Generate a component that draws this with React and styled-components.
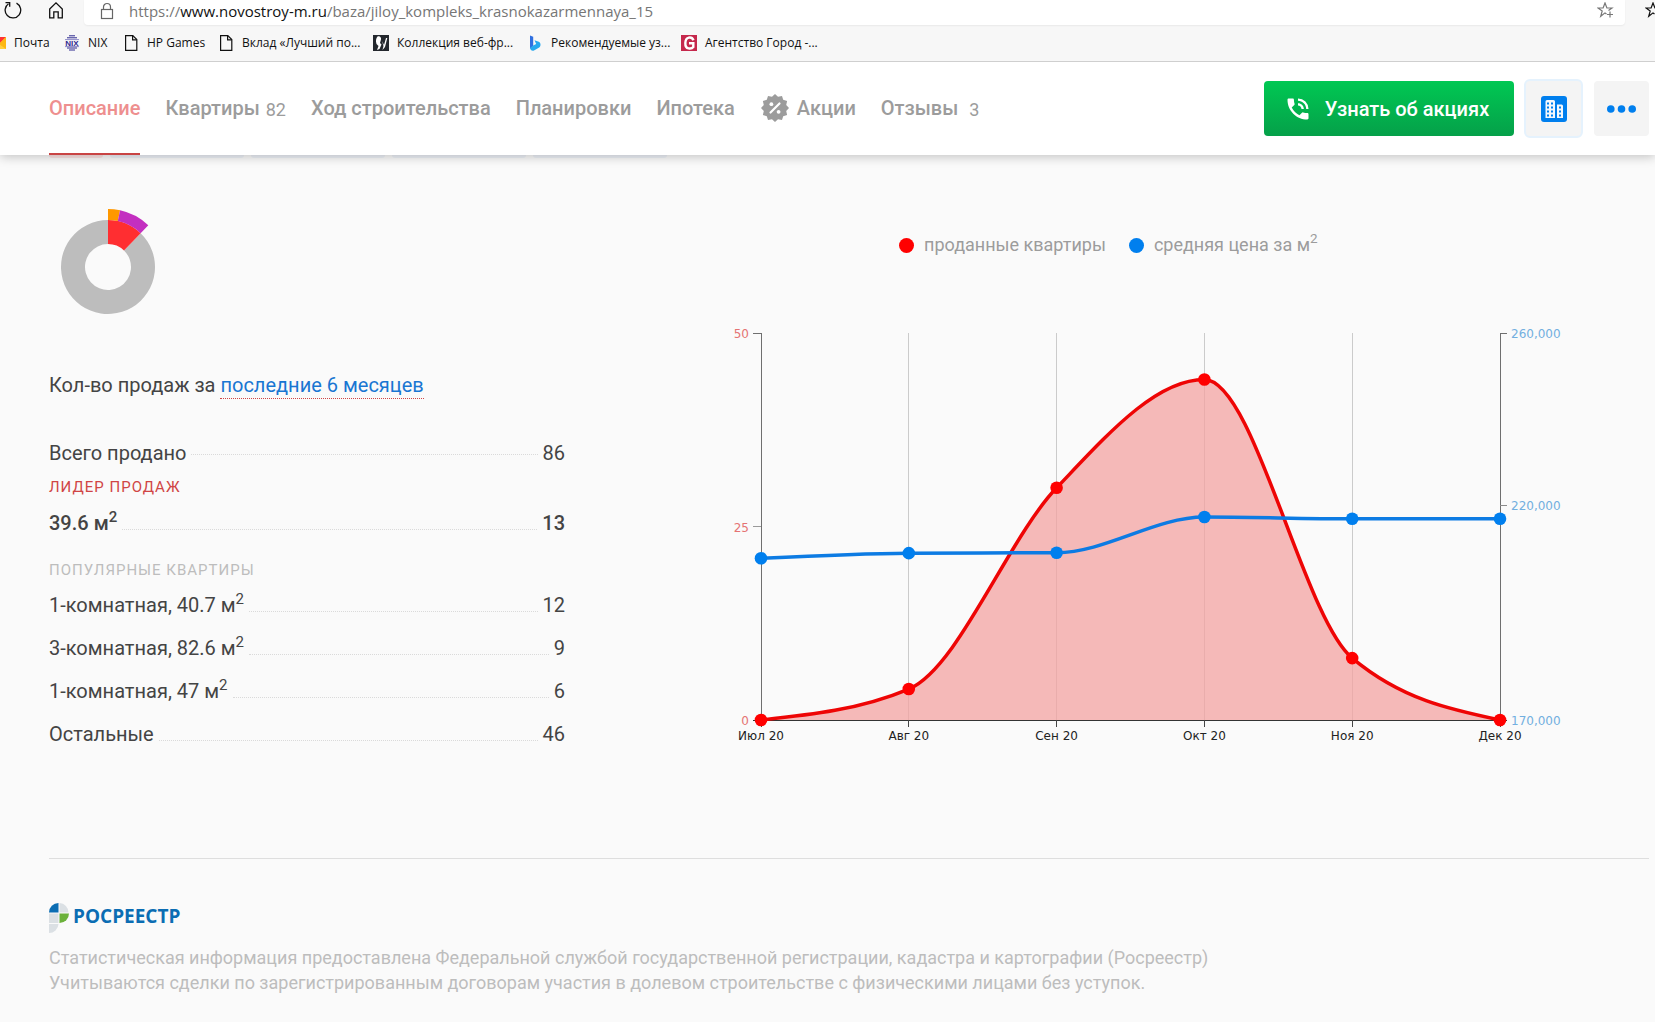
import styled, { createGlobalStyle } from 'styled-components';
import { MdPhoneInTalk } from 'react-icons/md';

const bookmarks = [
  { title: 'Почта', icon: 'mail', width: 74 },
  { title: 'NIX', icon: 'nix', width: 59 },
  { title: 'HP Games', icon: 'page', width: 95 },
  { title: 'Вклад «Лучший по...', icon: 'page', width: 155 },
  { title: 'Коллекция веб-фр...', icon: 'fonts', width: 154 },
  { title: 'Рекомендуемые уз...', icon: 'bing', width: 154 },
  { title: 'Агентство Город -...', icon: 'city', width: 154 },
];

const tabs = [
  { title: 'Описание', active: true },
  { title: 'Квартиры', count: 82 },
  { title: 'Ход строительства' },
  { title: 'Планировки' },
  { title: 'Ипотека' },
  { title: 'Акции', badge: true },
  { title: 'Отзывы', count: 3, wide: true },
];

const popular = [
  { title: '1-комнатная, 40.7 м', area: true, count: 12 },
  { title: '3-комнатная, 82.6 м', area: true, count: 9 },
  { title: '1-комнатная, 47 м', area: true, count: 6 },
  { title: 'Остальные', count: 46 },
];

const months = ['Июл 20', 'Авг 20', 'Сен 20', 'Окт 20', 'Ноя 20', 'Дек 20'];
const sold = [0, 4, 30, 44, 8, 0];
const prices = [207600, 208800, 208900, 217200, 216800, 216800];

const plot = { left: 36, right: 775, top: 14, bottom: 401 };

const scaleX = (i) => plot.left + ((plot.right - plot.left) * i) / (months.length - 1);
const scaleSold = (v) => plot.bottom - ((plot.bottom - plot.top) * v) / 50;
const scalePrice = (v) => plot.bottom - ((plot.bottom - plot.top) * (v - 170000)) / 90000;

// monotone cubic interpolation, the curve never overshoots the points
const curve = (points) => {
  const n = points.length;
  const h = [];
  const s = [];
  for (let i = 0; i < n - 1; i++) {
    h.push(points[i + 1][0] - points[i][0]);
    s.push((points[i + 1][1] - points[i][1]) / h[i]);
  }
  const t = points.map((_, i) => {
    if (i === 0 || i === n - 1) return 0;
    const p = (s[i - 1] * h[i] + s[i] * h[i - 1]) / (h[i - 1] + h[i]);
    return (Math.sign(s[i - 1]) + Math.sign(s[i]))
      * Math.min(Math.abs(s[i - 1]), Math.abs(s[i]), 0.5 * Math.abs(p));
  });
  t[0] = (3 * s[0] - t[1]) / 2;
  t[n - 1] = (3 * s[n - 2] - t[n - 2]) / 2;

  let d = `M${points[0][0]},${points[0][1]}`;
  for (let i = 0; i < n - 1; i++) {
    const [x0, y0] = points[i];
    const [x1, y1] = points[i + 1];
    const dx = h[i] / 3;
    d += `C${x0 + dx},${y0 + dx * t[i]},${x1 - dx},${y1 - dx * t[i + 1]},${x1},${y1}`;
  }
  return d;
};

const soldPoints = sold.map((v, i) => [scaleX(i), scaleSold(v)]);
const pricePoints = prices.map((v, i) => [scaleX(i), scalePrice(v)]);

const sector = (r0, r1, from, to) => {
  const point = (r, deg) => {
    const a = (deg * Math.PI) / 180;
    return `${59 + r * Math.sin(a)},${59 - r * Math.cos(a)}`;
  };
  const large = to - from > 180 ? 1 : 0;
  return `M${point(r1, from)}A${r1},${r1},0,${large},1,${point(r1, to)}`
    + `L${point(r0, to)}A${r0},${r0},0,${large},0,${point(r0, from)}Z`;
};

const BookmarkIcon = ({ type }) => {
  switch (type) {
    case 'mail':
      return (
        <svg width='16' height='16' viewBox='0 0 16 16'>
          <path d='M0 2h16v12H0z' fill='#ffcf3f' />
          <path d='M0 2h16L8 10z' fill='#f33' />
          <path d='M16 2v12L9 9z' fill='#fdb813' />
        </svg>
      );
    case 'nix':
      return (
        <svg width='16' height='16' viewBox='0 0 16 16'>
          <path d='M5 .8h6M3 2.8h10M3 13h10M5 15h6' stroke='#2e2a8f' strokeWidth='1' />
          <path d='M1 4.600h14M1 11.600h14' stroke='#8f8cc8' strokeWidth='1' />
          <text x='8' y='10.700' textAnchor='middle' fontFamily='Liberation Sans, sans-serif' fontWeight='700' fontSize='8' fill='#2e2a8f'>NIX</text>
        </svg>
      );
    case 'fonts':
      return (
        <svg width='16' height='16' viewBox='0 0 16 16'>
          <rect width='16' height='16' fill='#23272d' />
          <path d='M4.500 1.500C6.500.5 8.500 2 8 4.500L7 8l1.500 1.500L6.500 14l-2.500 1L5.500 11l-2-2C2.500 6 3 3 4.500 1.500z' fill='#fff' />
          <path d='M9 6l2 4 2-7h1.300l-2.300 9L9.500 15l1-4z' fill='#fff' />
        </svg>
      );
    case 'bing':
      return (
        <svg width='16' height='16' viewBox='0 0 16 16'>
          <path d='M3 .5l3.200 1.200v9.300L3 13.500z' fill='#2f6fe0' />
          <path d='M3 13l3.200-2.500 3-1.500-1.700-3.800 4.300 1.600c2.200 1 2.200 4.200.4 5.700L7 15.500c-2 .8-3.700-.6-4-2.500z' fill='#27a9ee' />
        </svg>
      );
    case 'city':
      return (
        <svg width='16' height='16' viewBox='0 0 16 16'>
          <rect width='16' height='16' fill='#c5284c' />
          <path d='M12.500 5.200C11.500 2.800 9.500 2.300 7.800 2.600 3.500 3.300 3 12.500 7.500 13.400c2 .4 4-.3 4.800-1.400V8.300H8' fill='none' stroke='#fff' strokeWidth='2.400' />
        </svg>
      );
    default:
      return (
        <svg width='16' height='16' viewBox='0 0 16 16' fill='none' stroke='#111' strokeWidth='1.200'>
          <path d='M2.600.6h7.200l4 4v10.800H2.600z' />
          <path d='M9.600.8v4h4' />
        </svg>
      );
  }
};

const StarIcon = ({ plus, color }) => (
  <svg width='17' height='17' viewBox='0 0 17 17' fill='none' stroke={color} strokeWidth='1.200'>
    <path d='M9.500 12L8 10.900l-4.300 3.400 1.500-5.400L1 6h5.100L8 1l1.900 5H15l-3.500 2.600' />
    {plus && <path d='M13 9.500v6M10 12.500h6' />}
  </svg>
);

const PercentBadge = () => {
  const points = Array.from({ length: 24 }, (_, i) => {
    const r = i % 2 ? 11.6 : 14;
    const a = (i * Math.PI) / 12;
    return `${14 + r * Math.sin(a)},${14 - r * Math.cos(a)}`;
  }).join(' ');

  return (
    <svg width='28' height='28' viewBox='0 0 28 28' aria-hidden='true'>
      <polygon points={points} fill='#9c9c9c' />
      <path d='M9.500 18.500l9-9' stroke='#fff' strokeWidth='2.200' strokeLinecap='round' />
      <circle cx='10.400' cy='10.200' r='1.900' fill='#fff' />
      <circle cx='17.600' cy='17.800' r='1.900' fill='#fff' />
    </svg>
  );
};

const BuildingIcon = () => (
  <svg width='26' height='26' viewBox='0 0 26 26' aria-hidden='true'>
    <rect width='26' height='26' rx='3' fill='#007fee' />
    <path d='M4.500 22V5.500a1.500 1.500 0 0 1 1.500-1.500h6.500A1.500 1.500 0 0 1 14 5.500V22z' fill='#f3f8fd' />
    <path d='M16 22V8.500h4.500A1.500 1.500 0 0 1 22 10v12z' fill='#f3f8fd' />
    <path
      d='M6 6.500h2v2H6zM10 6.500h2v2h-2zM6 10.500h2v2H6zM10 10.500h2v2h-2zM6 14.500h2v2H6zM10 14.500h2v2h-2zM6 18.500h2v2H6zM10 18.500h2v2h-2zM18 10.500h2v2h-2zM18 14.500h2v2h-2zM18 18.500h2v2h-2z'
      fill='#007fee'
    />
  </svg>
);

const Donut = () => (
  <svg width='118' height='118' viewBox='0 0 118 118' role='img' aria-label='Доля проданных квартир'>
    <path d={sector(23, 47, 44, 360)} fill='#bdbdbd' />
    <path d={sector(23, 47, 0, 44)} fill='#ff2e31' />
    <path d={sector(47, 58, 0, 12)} fill='#ff9800' />
    <path d={sector(47, 58, 12, 44)} fill='#c32fc0' />
  </svg>
);

const SalesRow = ({ title, area, count, bold, raised }) => (
  <Row $bold={bold}>
    <dt>{title}{area && <Sup>2</Sup>}</dt>
    <Leader $raised={raised} />
    <dd>{count}</dd>
  </Row>
);

const Chart = () => (
  <ChartSvg viewBox='0 0 924 430' role='img' aria-label='Продажи и средняя цена по месяцам'>
    <g shapeRendering='crispEdges'>
      {months.slice(1, -1).map((month, i) => (
        <line key={month} x1={scaleX(i + 1)} x2={scaleX(i + 1)} y1={plot.top} y2={plot.bottom} stroke='#cbcbcb' />
      ))}
      <path d={`M${plot.left - 8},${plot.top}H${plot.left}V${plot.bottom}`} fill='none' stroke='#6f6f6f' />
      <path d={`M${plot.left - 8},${scaleSold(25)}H${plot.left}`} stroke='#9a9a9a' />
      <path d={`M${plot.right + 7},${plot.top}H${plot.right}V${plot.bottom}`} fill='none' stroke='#6f6f6f' />
      <path d={`M${plot.right + 7},${scalePrice(220000)}H${plot.right}`} stroke='#8a8a8a' />
    </g>

    <path d={`${curve(soldPoints)}Z`} fill='#f3a3a2' fillOpacity='0.75' />
    <path d={`M${plot.left - 8},${plot.bottom}H${plot.right + 7}`} stroke='#333' shapeRendering='crispEdges' />
    {months.map((month, i) => (
      <g key={month}>
        <line x1={scaleX(i)} x2={scaleX(i)} y1={plot.bottom} y2={plot.bottom + 7} stroke='#444' shapeRendering='crispEdges' />
        <AxisLabel x={scaleX(i)} y={plot.bottom + 20} textAnchor='middle' fill='#222'>{month}</AxisLabel>
      </g>
    ))}
    {[0, 25, 50].map((v) => (
      <AxisLabel key={v} x={plot.left - 12} y={scaleSold(v) + 5} textAnchor='end' fill='#e57373'>{v}</AxisLabel>
    ))}
    {[170000, 220000, 260000].map((v) => (
      <AxisLabel key={v} x={plot.right + 11} y={scalePrice(v) + 5} fill='#72afe0'>
        {v.toLocaleString('en-US')}
      </AxisLabel>
    ))}

    <path d={curve(soldPoints)} fill='none' stroke='#ee0505' strokeWidth='3.500' />
    <path d={curve(pricePoints)} fill='none' stroke='#0d7be3' strokeWidth='3.500' />
    {soldPoints.map(([x, y]) => <circle key={x} cx={x} cy={y} r='6.300' fill='#f00' />)}
    {pricePoints.map(([x, y]) => <circle key={x} cx={x} cy={y} r='6.300' fill='#007fee' />)}
  </ChartSvg>
);

const App = () => (
  <>
    <GlobalStyle />
    <Browser>
      <AddressRow>
        <ToolButton $gap={26} aria-label='Обновить'>
          <svg width='18' height='20' viewBox='0 0 18 20' fill='none' stroke='#111' strokeWidth='1.300'>
            <path d='M12.500 3.200A7.800 7.800 0 1 1 4.500 3.700' />
            <path d='M1.500 2.600h4.200v4.200' />
          </svg>
        </ToolButton>
        <ToolButton $gap={20} aria-label='Домой'>
          <svg width='16' height='18' viewBox='0 0 16 18' fill='none' stroke='#111' strokeWidth='1.300'>
            <path d='M1.700 8L8 1.900 14.300 8v8.800h-4.100v-6H5.800v6H1.700z' />
          </svg>
        </ToolButton>
        <AddressBar>
          <svg width='14' height='18' viewBox='0 0 14 18' fill='none' stroke='#666' strokeWidth='1.200'>
            <rect x='1.500' y='7.500' width='11' height='9' />
            <path d='M3.500 7.500V5a3.500 3.500 0 0 1 7 0v2.500' />
          </svg>
          <Url>https://<b>www.novostroy-m.ru</b>/baza/jiloy_kompleks_krasnokazarmennaya_15</Url>
          <StarIcon plus color='#777' />
        </AddressBar>
        <ToolButton aria-label='Избранное'><StarIcon color='#111' /></ToolButton>
      </AddressRow>
      <Bookmarks>
        {bookmarks.map(({ title, icon, width }) => (
          <Bookmark key={title} href='#' $width={width}>
            <BookmarkIcon type={icon} />
            {title}
          </Bookmark>
        ))}
      </Bookmarks>
    </Browser>

    <Header>
      <Nav>
        {tabs.map(({ title, active, count, badge, wide }) => (
          <NavLink key={title} href='#' $active={active} $badge={badge}>
            {badge && <PercentBadge />}
            {title}
            {count && <Count $wide={wide}>{count}</Count>}
          </NavLink>
        ))}
      </Nav>
      <CallButton>
        <MdPhoneInTalk size={28} />
        Узнать об акциях
      </CallButton>
      <SquareButton $outlined aria-label='Жилой комплекс'><BuildingIcon /></SquareButton>
      <SquareButton aria-label='Ещё'>
        <svg width='29' height='8' viewBox='0 0 29 8' fill='#007fee'>
          <circle cx='3.800' cy='4' r='3.800' />
          <circle cx='14.500' cy='4' r='3.800' />
          <circle cx='25.200' cy='4' r='3.800' />
        </svg>
      </SquareButton>
    </Header>

    <Main>
      <Chips aria-hidden='true'>
        <Chip $width={54} $active />
        <Chip $width={134} />
        <Chip $width={134} />
        <Chip $width={134} />
        <Chip $width={134} />
      </Chips>

      <Stats>
        <div>
          <Donut />
          <Period>
            Кол-во продаж за <PeriodButton>последние 6 месяцев</PeriodButton>
          </Period>
          <Sales>
            <SalesRow title='Всего продано' count={86} raised />
          </Sales>
          <Caption $accent>Лидер продаж</Caption>
          <Sales>
            <SalesRow title='39.6 м' area count={13} bold />
          </Sales>
          <Caption>Популярные квартиры</Caption>
          <Sales $spaced>
            {popular.map((item) => <SalesRow key={item.title} {...item} />)}
          </Sales>
        </div>

        <ChartColumn>
          <Legend>
            <LegendItem $color='#f00'>проданные квартиры</LegendItem>
            <LegendItem $color='#007fee'><span>средняя цена за м<Sup>2</Sup></span></LegendItem>
          </Legend>
          <Chart />
        </ChartColumn>
      </Stats>

      <Source>
        <Logo>
          <svg width='20' height='30' viewBox='0 0 20 30' aria-hidden='true'>
            <path d='M0 9.500A9.500 9.500 0 0 1 9.500 0v9.500z' fill='#0b6db3' />
            <path d='M10.500 0A9.500 9.500 0 0 1 19.500 9.500h-9z' fill='#dbe0e4' />
            <path d='M10.500 10.500h9.500A9.500 9.500 0 0 1 10.500 20z' fill='#6bb13a' />
            <path d='M0 10.500h9.500V20H0zM0 21h9.500A9.500 9.500 0 0 1 0 30z' fill='#dbe0e4' />
          </svg>
          РОСРЕЕСТР
        </Logo>
        <Note>
          Статистическая информация предоставлена Федеральной службой государственной регистрации, кадастра и картографии (Росреестр)
          <br />
          Учитываются сделки по зарегистрированным договорам участия в долевом строительстве с физическими лицами без уступок.
        </Note>
      </Source>
    </Main>
  </>
);

export default App;

const GlobalStyle = createGlobalStyle`
  * {
    box-sizing: border-box;
  }

  body {
    margin: 0;
    overflow-x: hidden;
    background-color: #fafafa;
    color: #444;
    font-family: Roboto, sans-serif;
    font-size: 20px;
  }

  a {
    color: inherit;
    text-decoration: none;
  }

  button {
    border: 0;
    padding: 0;
    background: none;
    color: inherit;
    font: inherit;
    cursor: pointer;
  }

  svg {
    display: block;
    flex-shrink: 0;
  }
`;

const Browser = styled.div`
  position: relative;
  z-index: 2;
  overflow: hidden;
  border-bottom: 1px solid #cfcfcf;
  background-color: #f7f7f7;
  font-family: 'Open Sans', 'Noto Sans', sans-serif;
  color: #111;
`;

const AddressRow = styled.div`
  display: flex;
  height: 25px;
  padding-left: 4px;
`;

const ToolButton = styled.button`
  display: flex;
  align-items: center;
  flex-shrink: 0;
  height: 20px;
  margin-right: ${({ $gap }) => $gap}px;
  overflow: hidden;

  &:last-child {
    width: 10px;
    margin: 0 0 0 20px;
  }
`;

const AddressBar = styled.div`
  display: flex;
  align-items: center;
  flex: 1;
  padding: 0 11px 4px 16px;
  border-radius: 0 0 4px 4px;
  background-color: #fff;
  box-shadow: 0 1px 2px rgba(0, 0, 0, 0.06);
`;

const Url = styled.span`
  flex: 1;
  margin-left: 15px;
  color: #767676;
  font-size: 15px;
  line-height: 20px;

  b {
    color: #111;
    font-weight: 400;
  }
`;

const Bookmarks = styled.nav`
  display: flex;
  align-items: center;
  height: 36px;
  margin-left: -10px;
`;

const Bookmark = styled.a`
  display: flex;
  align-items: center;
  gap: 8px;
  flex: 0 0 ${({ $width }) => $width}px;
  font-size: 12px;
  line-height: 16px;
  white-space: nowrap;
`;

const Header = styled.header`
  position: relative;
  display: flex;
  align-items: center;
  height: 93px;
  padding: 0 6px 0 49px;
  background-color: #fff;
  box-shadow: 0 2px 10px rgba(0, 0, 0, 0.22);
`;

const Nav = styled.nav`
  display: flex;
  align-self: stretch;
  gap: 25px;
  margin-right: auto;
`;

const NavLink = styled.a`
  display: flex;
  align-items: center;
  gap: ${({ $badge }) => ($badge ? 8 : 6)}px;
  padding-left: ${({ $badge }) => ($badge ? 1 : 0)}px;
  border-bottom: 2px solid ${({ $active }) => ($active ? '#c94444' : 'transparent')};
  color: ${({ $active }) => ($active ? '#ee8f8f' : '#9c9c9c')};
  font-weight: 500;
  white-space: nowrap;
`;

const Count = styled.span`
  margin-left: ${({ $wide }) => ($wide ? 5 : 0)}px;
  padding-top: 3px;
  font-size: 18px;
  font-weight: 400;
`;

const CallButton = styled.button`
  display: flex;
  align-items: center;
  justify-content: center;
  gap: 13px;
  width: 250px;
  height: 55px;
  margin-right: 10px;
  padding-right: 5px;
  border-radius: 4px;
  background: linear-gradient(#00c853, #05a049);
  color: #fff;
  font-weight: 500;
`;

const SquareButton = styled.button`
  display: flex;
  align-items: center;
  justify-content: center;
  width: ${({ $outlined }) => ($outlined ? 59 : 55)}px;
  height: ${({ $outlined }) => ($outlined ? 59 : 55)}px;
  margin-right: ${({ $outlined }) => ($outlined ? 11 : 0)}px;
  border: ${({ $outlined }) => ($outlined ? '2px solid #e5f2fd' : '0')};
  border-radius: ${({ $outlined }) => ($outlined ? 6 : 4)}px;
  background-color: #f4f4f4;
`;

const Main = styled.main`
  padding: 0 6px 20px 49px;
`;

const Chips = styled.div`
  display: flex;
  gap: 7px;
  height: 3px;
`;

const Chip = styled.span`
  width: ${({ $width }) => $width}px;
  border-radius: 0 0 3px 3px;
  background-color: ${({ $active }) => ($active ? '#fbe3e3' : '#edf1f7')};
`;

const Stats = styled.section`
  display: grid;
  grid-template-columns: 516px minmax(0, 1fr);
  column-gap: 160px;
  padding: 50px 0 102px;
  border-bottom: 1px solid #dedede;
`;

const Period = styled.p`
  margin: 46px 0 40px;
  line-height: 26px;
`;

const PeriodButton = styled.button`
  border-bottom: 1px dotted #d04545;
  color: #1976d2;
`;

const Sales = styled.dl`
  margin: 0;
  line-height: ${({ $spaced }) => ($spaced ? 43 : 28)}px;
`;

const Row = styled.div`
  display: flex;
  gap: 5px;
  font-weight: ${({ $bold }) => ($bold ? 500 : 400)};

  dd {
    margin: 0;
  }
`;

const Sup = styled.sup`
  position: relative;
  top: -8px;
  font-size: 75%;
  line-height: 0;
  vertical-align: baseline;
`;

const Leader = styled.span`
  flex: 1;
  align-self: center;
  border-bottom: 1px dotted #dadada;
  margin-top: ${({ $raised }) => ($raised ? 2 : 12)}px;
`;

const Caption = styled.h3`
  margin: ${({ $accent }) => ($accent ? '10px 0 12px' : '23px 0 4px')};
  color: ${({ $accent }) => ($accent ? '#d04545' : '#bdbdbd')};
  font-size: 15px;
  font-weight: 400;
  line-height: 20px;
  letter-spacing: 1px;
  text-transform: uppercase;
`;

const ChartColumn = styled.div`
  padding-top: 24px;
`;

const Legend = styled.div`
  display: flex;
  gap: 23px;
  padding-left: 174px;
  color: #9c9c9c;
  font-size: 18px;
  line-height: 26px;
`;

const LegendItem = styled.span`
  display: flex;
  align-items: center;
  gap: 10px;

  &::before {
    content: '';
    width: 15px;
    height: 15px;
    border-radius: 50%;
    background-color: ${({ $color }) => $color};
  }
`;

const ChartSvg = styled.svg`
  width: 100%;
  margin-top: 61px;
`;

const AxisLabel = styled.text`
  font-family: 'DejaVu Sans', sans-serif;
  font-size: 12px;
`;

const Source = styled.footer`
  padding-top: 44px;
`;

const Logo = styled.div`
  display: flex;
  gap: 4px;
  color: #0b6db3;
  font-family: 'Open Sans', sans-serif;
  font-size: 19px;
  font-weight: 700;
  line-height: 26px;
`;

const Note = styled.p`
  margin: 12px 0 0;
  color: #bdbdbd;
  font-size: 18px;
  line-height: 25px;
`;
